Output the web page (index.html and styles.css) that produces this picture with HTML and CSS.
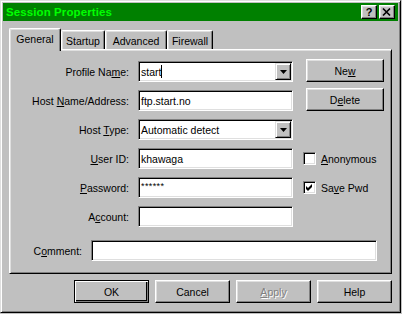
FILE: index.html
```html
<!DOCTYPE html>
<html>
<head>
<meta charset="utf-8">
<link rel="stylesheet" href="styles.css">
</head>
<body>
<div class="window">
  <div class="titlebar">
    <span class="title">Session Properties</span>
    <div class="title-buttons">
      <span class="tbtn help">?</span>
      <span class="tbtn close"><svg width="14" height="12" viewBox="0 0 14 12"><path d="M3 2.5 L10 9.5 M10 2.5 L3 9.5" stroke="#000" stroke-width="1.7" fill="none"/></svg></span>
    </div>
  </div>

  <div class="tabs">
    <div class="tab active t-general">General</div>
    <div class="tab t-startup">Startup</div>
    <div class="tab t-advanced">Advanced</div>
    <div class="tab t-firewall">Firewall</div>
  </div>

  <div class="panel">
    <div class="form">
      <div class="lbl"><span>Profile Na<u>m</u>e:</span></div>
      <div class="field combo"><span class="val">start<span class="caret"></span></span><span class="drop"><svg width="7" height="4" viewBox="0 0 7 4"><path d="M0 0 H7 L3.5 4 Z" fill="#000"/></svg></span></div>
      <div class="side"><button class="btn side-btn"><span>Ne<u>w</u></span></button></div>

      <div class="lbl"><span>Host <u>N</u>ame/Address:</span></div>
      <div class="field"><span class="val">ftp.start.no</span></div>
      <div class="side"><button class="btn side-btn"><span>D<u>e</u>lete</span></button></div>

      <div class="lbl"><span>Host <u>T</u>ype:</span></div>
      <div class="field combo"><span class="val">Automatic detect</span><span class="drop"><svg width="7" height="4" viewBox="0 0 7 4"><path d="M0 0 H7 L3.5 4 Z" fill="#000"/></svg></span></div>
      <div class="side"></div>

      <div class="lbl"><span><u>U</u>ser ID:</span></div>
      <div class="field"><span class="val">khawaga</span></div>
      <div class="side check-row"><span class="checkbox"></span><span><u>A</u>nonymous</span></div>

      <div class="lbl"><span><u>P</u>assword:</span></div>
      <div class="field"><span class="val pwd">******</span></div>
      <div class="side check-row"><span class="checkbox"><svg width="11" height="11" viewBox="0 0 11 11"><path d="M2 4 L4 6 L8 2 L8 5 L4 9 L2 7 Z" fill="#000"/></svg></span><span>Sa<u>v</u>e Pwd</span></div>

      <div class="lbl"><span>A<u>c</u>count:</span></div>
      <div class="field"><span class="val"></span></div>
      <div class="side"></div>
    </div>

    <div class="comment-row">
      <div class="lbl comment-lbl"><span>C<u>o</u>mment:</span></div>
      <div class="field comment-field"><span class="val"></span></div>
    </div>
  </div>

  <div class="actions">
    <button class="btn action default">OK</button>
    <button class="btn action">Cancel</button>
    <button class="btn action disabled"><span><u>A</u>pply</span></button>
    <button class="btn action">Help</button>
  </div>
</div>
</body>
</html>
```
FILE: styles.css
```css
* { box-sizing: border-box; }

html, body {
  margin: 0;
  padding: 0;
}

body {
  width: 402px;
  height: 314px;
  overflow: hidden;
  background: #c0c0c0;
  font-family: "Liberation Sans", Arial, sans-serif;
  font-size: 10.5px;
  color: #000;
}

.window {
  width: 401px;
  height: 313px;
  background: #c0c0c0;
  border: 1px solid;
  border-color: #dfdfdf #000 #000 #dfdfdf;
  box-shadow: inset 1px 1px #fff, inset -1px -1px #808080;
  padding: 2px;
  display: flex;
  flex-direction: column;
}

.titlebar {
  height: 18px;
  flex: none;
  background: #008000;
  display: flex;
  align-items: center;
  justify-content: space-between;
  padding: 0 3px 0 3px;
}

.title {
  color: #00ff00;
  font-weight: bold;
  font-size: 11.5px;
  letter-spacing: 0.1px;
}

.title-buttons {
  display: flex;
  gap: 2px;
}

.tbtn {
  width: 16px;
  height: 14px;
  background: #c0c0c0;
  border: 1px solid;
  border-color: #fff #000 #000 #fff;
  box-shadow: inset -1px -1px #808080, inset 1px 1px #dfdfdf;
  display: flex;
  align-items: center;
  justify-content: center;
  font-weight: bold;
  font-size: 11px;
  line-height: 1;
}

.tbtn svg { display: block; }

/* Tabs */
.tabs {
  display: flex;
  align-items: flex-end;
  height: 21px;
  margin: 7px 0 0 6px;
  position: relative;
  z-index: 1;
  flex: none;
}

.tab {
  height: 19px;
  background: #c0c0c0;
  border-left: 1px solid #fff;
  border-top: 1px solid #fff;
  border-right: 1px solid #000;
  border-radius: 2px 2px 0 0;
  box-shadow: inset -1px 0 #808080, inset 1px 1px #dfdfdf;
  display: flex;
  align-items: center;
  justify-content: center;
  padding-top: 1px;
  white-space: nowrap;
}

.tab.active {
  height: 23px;
  margin-bottom: -2px;
  padding-bottom: 3px;
}

.t-general { width: 52px; }
.t-startup { width: 44px; }
.t-advanced { width: 62px; }
.t-firewall { width: 46px; }

/* Panel */
.panel {
  margin: 0 6px;
  height: 225px;
  flex: none;
  border: 1px solid;
  border-color: #fff #000 #000 #fff;
  box-shadow: inset 1px 1px #dfdfdf, inset -1px -1px #808080;
  padding: 11px 0 0 0;
}

.form {
  display: grid;
  grid-template-columns: 119px 155px 82px;
  grid-auto-rows: 21px;
  column-gap: 9px;
  row-gap: 8px;
}

.lbl {
  display: flex;
  align-items: center;
  justify-content: flex-end;
  white-space: nowrap;
}

.field {
  background: #fff;
  border: 1px solid;
  border-color: #808080 #fff #fff #808080;
  box-shadow: inset 1px 1px #000, inset -1px -1px #dfdfdf;
  display: flex;
  align-items: center;
  padding: 0 2px 0 2px;
  height: 21px;
  white-space: nowrap;
}

.val {
  flex: 1;
  display: flex;
  align-items: center;
}

.caret {
  display: inline-block;
  width: 1px;
  height: 13px;
  background: #000;
}

.pwd {
  font-size: 9px;
  align-self: flex-start;
  padding-top: 3px;
  letter-spacing: 0.4px;
}

.drop {
  width: 16px;
  height: 17px;
  flex: none;
  margin-right: -1px;
  background: #c0c0c0;
  border: 1px solid;
  border-color: #dfdfdf #000 #000 #dfdfdf;
  box-shadow: inset 1px 1px #fff, inset -1px -1px #808080;
  display: flex;
  align-items: center;
  justify-content: center;
}

.drop svg { display: block; }

.side {
  display: flex;
  align-items: center;
}

.btn {
  font-family: inherit;
  font-size: 10.5px;
  color: #000;
  background: #c0c0c0;
  border: 1px solid;
  border-color: #fff #000 #000 #fff;
  box-shadow: inset -1px -1px #808080, inset 1px 1px #dfdfdf;
  padding: 0;
  margin: 0;
  display: flex;
  align-items: center;
  justify-content: center;
}

.side-btn {
  width: 78px;
  height: 23px;
  margin-left: 4px;
  margin-top: -2px;
  align-self: flex-start;
}

.check-row {
  gap: 5px;
  padding-left: 1px;
}

.checkbox {
  width: 13px;
  height: 13px;
  flex: none;
  background: #fff;
  border: 1px solid;
  border-color: #808080 #fff #fff #808080;
  box-shadow: inset 1px 1px #000, inset -1px -1px #dfdfdf;
}

.checkbox svg { display: block; }

.comment-row {
  display: flex;
  gap: 9px;
  margin-top: 13px;
}

.comment-lbl {
  width: 72px;
}

.comment-field {
  width: 286px;
}

/* Bottom buttons */
.actions {
  display: flex;
  justify-content: flex-end;
  gap: 6px;
  margin-top: 6px;
  padding-right: 6px;
}

.action {
  width: 75px;
  height: 23px;
}

.action.default {
  border: 1px solid #000;
  box-shadow: inset 1px 1px #fff, inset -1px -1px #808080, inset -2px -2px #000;
}

.action.disabled {
  color: #808080;
  text-shadow: 1px 1px #fff;
}
```
